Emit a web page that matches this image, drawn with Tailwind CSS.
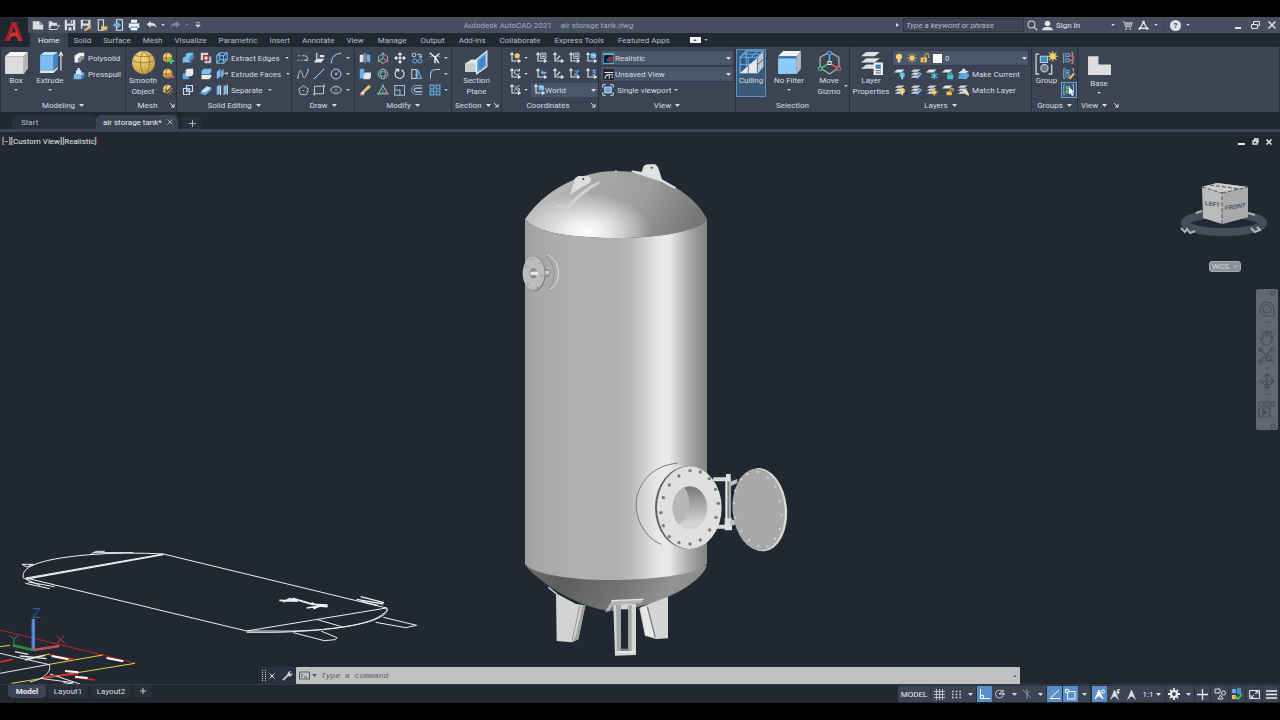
<!DOCTYPE html>
<html lang="en">
<head>
<meta charset="utf-8">
<title>Autodesk AutoCAD 2021</title>
<script src="https://cdn.jsdelivr.net/npm/@tailwindcss/browser@4"></script>
</head>
<body class="bg-black">
<svg width="0" height="0" class="absolute" aria-hidden="true">
<defs>
<linearGradient id="gBody" x1="0" x2="1" y1="0" y2="0"><stop offset="0" stop-color="#9c9e9d"/><stop offset=".06" stop-color="#a6a8a7"/><stop offset=".3" stop-color="#b0b2b0"/><stop offset=".5" stop-color="#adafad"/><stop offset=".6" stop-color="#bcbebc"/><stop offset=".72" stop-color="#e2e5e1"/><stop offset=".79" stop-color="#e8ebe7"/><stop offset=".88" stop-color="#b4b6b4"/><stop offset=".95" stop-color="#929492"/><stop offset="1" stop-color="#858785"/></linearGradient>
<linearGradient id="gDome" x1="0" x2="1" y1=".3" y2=".5"><stop offset="0" stop-color="#c3c5c4"/><stop offset=".35" stop-color="#a6a8a7"/><stop offset=".65" stop-color="#9c9e9d"/><stop offset="1" stop-color="#747675"/></linearGradient>
<radialGradient id="gGlow" gradientUnits="userSpaceOnUse" cx="586" cy="232" r="66" gradientTransform="translate(0 93) scale(1 .6)"><stop offset="0" stop-color="#fff"/><stop offset=".3" stop-color="#fff" stop-opacity=".8"/><stop offset="1" stop-color="#fff" stop-opacity="0"/></radialGradient>
<linearGradient id="gBase" x1="0" x2="1" y1="0" y2=".15"><stop offset="0" stop-color="#6d6f6f"/><stop offset=".25" stop-color="#5c5e5e"/><stop offset=".6" stop-color="#737575"/><stop offset=".85" stop-color="#929494"/><stop offset="1" stop-color="#8a8c8b"/></linearGradient>
<linearGradient id="gNeck" x1="0" x2="1"><stop offset="0" stop-color="#d0d3cf"/><stop offset=".5" stop-color="#eef0ed"/><stop offset="1" stop-color="#dfe1de"/></linearGradient>
<linearGradient id="gHole" x1="0" x2=".1" y1="0" y2="1"><stop offset="0" stop-color="#6f7170"/><stop offset=".45" stop-color="#a2a4a2"/><stop offset=".9" stop-color="#d2d4d2"/></linearGradient>
<radialGradient id="gBall" cx=".4" cy=".3" r=".8"><stop offset="0" stop-color="#f7df92"/><stop offset="1" stop-color="#c0932f"/></radialGradient>
<clipPath id="cHole"><ellipse cx="570" cy="174" rx="52" ry="65"/></clipPath>
</defs>
<symbol id="dn" viewBox="0 0 5 3"><path d="M0 0h5L2.500 3z" fill="currentColor"/></symbol>
<symbol id="launch" viewBox="0 0 6 6"><path d="M1 1l4 4M5 2v3H2" stroke="currentColor" fill="none"/></symbol>
<symbol id="logo" viewBox="0 0 20 22"><path d="M1 20L8 1h4l7 19h-4.500l-1.500-4C9 14 6 15 5.500 20zM7 13c2-2 4-2 5-1L10 5z" fill="#d8312f" fill-rule="evenodd"/><path d="M8 1h4l7 19h-2L10 3 4 20H1z" fill="#a51f24"/></symbol>
<symbol id="new" viewBox="0 0 16 16"><path d="M1 3h9l5 5v6H1z" fill="#d9dbdf"/><path d="M10 3v5h5z" fill="#8d949f"/></symbol>
<symbol id="open" viewBox="0 0 16 16"><path d="M1 13V3h4l2 2h5v3H5z" fill="#d9dbdf"/><path d="M4.500 8.500h11L12 14H1.500z" fill="none" stroke="#d9dbdf" stroke-width="1.200"/></symbol>
<symbol id="save" viewBox="0 0 16 16"><path d="M1 1h14v14H1z" fill="#d9dbdf"/><path d="M4 1h8v5H4zM4 9h8v6H4z" fill="#4a5464"/><path d="M6 11h4v4H6zM9 2h2v3H9z" fill="#d9dbdf"/></symbol>
<symbol id="saveas" viewBox="0 0 16 16"><path d="M1 1h13v12H1z" fill="#d9dbdf"/><path d="M4 2h7v4H4zM3 9h8v4H3z" fill="#4a5464"/><path d="M5 15l8-7 2 2-7 6z" fill="#e8b56a"/><path d="M13 8l2 2 1-2-2-1z" fill="#d94a4a"/></symbol>
<symbol id="openweb" viewBox="0 0 16 16"><path d="M3 1h7v14H3z" fill="none" stroke="#d9dbdf" stroke-width="1.500"/><path d="M7 9h3l1 1h5l-2 5H7z" fill="#f0c36b"/></symbol>
<symbol id="saveweb" viewBox="0 0 16 16"><path d="M6 1h8v14H6z" fill="none" stroke="#d9dbdf" stroke-width="1.500"/><path d="M2 6h5V3l5 5-5 5v-3H2z" fill="#67b5e8"/></symbol>
<symbol id="print" viewBox="0 0 16 16"><path d="M4 1h8v4H4zM1 6h14v6H1z" fill="#f0f2f4"/><path d="M3 10h10v5H3z" fill="#67b5e8"/><path d="M4 12h8v3H4z" fill="#fff"/></symbol>
<symbol id="undo" viewBox="0 0 16 16"><path d="M1 7l6-5v3c5 0 8 2 8 7-2-3-4-3-8-3v3z" fill="currentColor"/></symbol>
<symbol id="more" viewBox="0 0 8 8"><path d="M1 1h6M1 4h6L4 7z" stroke="currentColor" fill="currentColor"/></symbol>
<symbol id="mag" viewBox="0 0 16 16"><circle cx="6.500" cy="6.500" r="5" fill="none" stroke="#ccd0d6" stroke-width="1.500"/><path d="M10 10l5 5" stroke="#ccd0d6" stroke-width="2"/></symbol>
<symbol id="user" viewBox="0 0 16 16"><circle cx="8" cy="5" r="4" fill="#dfe2e6"/><path d="M0 15c0-4 4-5 8-5s8 1 8 5z" fill="#dfe2e6"/></symbol>
<symbol id="cart" viewBox="0 0 16 16"><path d="M1 2h2l2 8h8l2-6H4" fill="#b9bec7" stroke="#b9bec7" stroke-width="1.200"/><path d="M6 5v4M9 5v4M12 5v4" stroke="#454f60"/><circle cx="6" cy="13" r="1.500" fill="#b9bec7"/><circle cx="12" cy="13" r="1.500" fill="#b9bec7"/></symbol>
<symbol id="apps" viewBox="0 0 16 16"><path d="M3 12L8 3l5 9M2 12h12" fill="none" stroke="#dfe2e6" stroke-width="2"/><circle cx="8" cy="3" r="2" fill="#dfe2e6"/><circle cx="2.500" cy="12.500" r="2" fill="#dfe2e6"/><circle cx="13.500" cy="12.500" r="2" fill="#dfe2e6"/></symbol>
<symbol id="box" viewBox="0 0 24 24"><path d="M1 6l5-4h17l-4 4z" fill="#f4f4f4"/><path d="M1 6h18v17H1z" fill="#dcdcdc"/><path d="M19 6l4-4v16l-4 5z" fill="#b4b5b7"/></symbol>
<symbol id="extrude" viewBox="0 0 24 24"><path d="M2 5l4-3h13l-4 3z" fill="#bfe0fa"/><path d="M2 5h13v15H2z" fill="#79bdf2"/><path d="M15 5l4-3v14l-4 4z" fill="#3f86c4"/><path d="M2 20h13l4-4v2l-4 4H2z" fill="#e2e4e6"/><path d="M22 20V3M20 6l2-4 2 4" stroke="#eee" fill="none"/></symbol>
<symbol id="polysolid" viewBox="0 0 16 16"><path d="M2 5l6-4h7v5h-5l-3 3v5H2z" fill="#f0f0f0"/><path d="M7 9l3-3h5v4h-3l-2 4H7z" fill="#8f9399"/></symbol>
<symbol id="presspull" viewBox="0 0 16 16"><path d="M1 9l4-3h10v5l-4 4H1z" fill="#7dbdee"/><path d="M4 6V3h2V0h3v3h2v5H4z" fill="#d8ecfb"/><path d="M11 11l4-4v5l-4 3z" fill="#3d7fb9"/></symbol>
<symbol id="smooth" viewBox="0 0 24 24"><circle cx="12" cy="12" r="11" fill="url(#gBall)"/><path d="M1.500 10c5 3 15 3 21 0M12 1c-4 6-4 16 0 22M12 1c7 5 7 10 4 21M4 5c5 2 12 2 16 0" fill="none" stroke="#8a6a26" stroke-width=".7"/></symbol>
<symbol id="ball" viewBox="0 0 16 16"><circle cx="7.500" cy="7.500" r="6.500" fill="url(#gBall)"/><path d="M1 7c4 2 9 2 13 0M7 1c-2 4-2 9 0 13" fill="none" stroke="#6f5318"/></symbol>
<symbol id="meshadd" viewBox="0 0 16 16"><use href="#ball"/><path d="M12 8v8M8 12h8" stroke="#52c46a" stroke-width="2.500"/></symbol>
<symbol id="meshsub" viewBox="0 0 16 16"><use href="#ball"/><path d="M7 12h9" stroke="#e05a50" stroke-width="2.500"/></symbol>
<symbol id="meshcrease" viewBox="0 0 16 16"><use href="#ball"/><path d="M3 14L14 3M6 15l9-8" stroke="#3b4453" stroke-width="1.500"/></symbol>
<symbol id="union" viewBox="0 0 16 16"><path d="M1 8l3-2h1V3l3-2h7v8l-3 2v3H3l-2 1z" fill="#7dbdf0"/><path d="M11 6l4-4v7l-3 2v2l-3 2V9z" fill="#4b8fcb"/></symbol>
<symbol id="subtract" viewBox="0 0 16 16"><path d="M5 3l2-2h8v8l-3 2H5z" fill="#e9ebee"/><path d="M1 7h8v8H1z" fill="#5fa5dd"/><path d="M5 6h5v5H5z" fill="#dfe2e6"/></symbol>
<symbol id="intersect" viewBox="0 0 16 16"><path d="M6 2h8v8H6zM2 6h8v8H2z" fill="none" stroke="#d4d8dd" stroke-width="1.500"/><path d="M6 6h5v5H6z" fill="#7dbdf0"/></symbol>
<symbol id="interfere" viewBox="0 0 16 16"><path d="M1 1h10v10H1z" fill="#d4d7db"/><path d="M6 6h9v9H6z" fill="#b8bcc2"/><path d="M4 4h8v8H4z" fill="#b02b36"/><path d="M6 6h4v4H6z" fill="#eee"/></symbol>
<symbol id="slice" viewBox="0 0 16 16"><path d="M2 4l3-3h10v5l-3 2H2z" fill="#7dbdf0"/><path d="M2 10l1-1h12v3l-3 3H2z" fill="#e9ebee"/></symbol>
<symbol id="thicken" viewBox="0 0 16 16"><path d="M1 10l8-7 6 2-8 7z" fill="#c9e4fa"/><path d="M1 10l6 2 8-7v3l-8 7-6-2z" fill="#64a9df"/></symbol>
<symbol id="edges" viewBox="0 0 16 16"><path d="M1 5h9v10H1zM1 5l4-4h10v9l-5 5M10 5l5-4M5 1v9L1 15M5 10h10" fill="none" stroke="#6fb5ec" stroke-width="1.500"/></symbol>
<symbol id="faces" viewBox="0 0 16 16"><path d="M1 5l5-4v10l-5 4zM7 4l3-3v9L7 14z" fill="#7dbdf0"/><path d="M10 7h6M14 5l2 2-2 2" stroke="#eee" fill="none"/></symbol>
<symbol id="separate" viewBox="0 0 16 16"><path d="M1 3l4-2v12l-4 2zM10 2h4v11l-4 2z" fill="#7dbdf0"/><path d="M6 2v13M15 1v13" stroke="#e6e6e6" stroke-width="1.500"/></symbol>
<symbol id="pline3" viewBox="0 0 16 16"><path d="M1 11h2m2 0h2m2 0h6M2 5h2m3 0h3c5 0 5 6 1 6" fill="none" stroke="#c9cdd3" stroke-width="1.300"/></symbol>
<symbol id="plane" viewBox="0 0 16 16"><path d="M5 1v9h9" fill="none" stroke="#e3e5e8" stroke-width="1.500"/><path d="M1 14l4-5h10l-4 5zM9 4h6v3H9z" fill="#e3e5e8"/></symbol>
<symbol id="arc" viewBox="0 0 16 16"><path d="M2 14C2 7 7 2 14 2" fill="none" stroke="#c9cdd3" stroke-width="1.300"/><path d="M1 13h2v2H1zM13 1h2v2h-2zM5 4h2v2H5z" fill="#7dbdf0"/></symbol>
<symbol id="spline" viewBox="0 0 16 16"><path d="M1 14C3 1 5 1 7 8s4 8 8-6" fill="none" stroke="#c9cdd3" stroke-width="1.300"/><path d="M0 12h2v2H0zM14 1h2v2h-2z" fill="#7dbdf0"/></symbol>
<symbol id="line" viewBox="0 0 16 16"><path d="M2 14L14 2" stroke="#c9cdd3" stroke-width="1.300"/><path d="M1 13h2v2H1zM13 1h2v2h-2z" fill="#7dbdf0"/></symbol>
<symbol id="circle" viewBox="0 0 16 16"><circle cx="8" cy="8" r="6.500" fill="none" stroke="#c9cdd3" stroke-width="1.300"/><path d="M8 8l5-5M7 7h2v2H7z" stroke="#7dbdf0" fill="#7dbdf0"/></symbol>
<symbol id="polygon" viewBox="0 0 16 16"><path d="M8 1l7 5-2.500 8h-9L1 6zM7 8h2" fill="none" stroke="#c9cdd3" stroke-width="1.300"/></symbol>
<symbol id="rect" viewBox="0 0 16 16"><path d="M2 3h12v10H2z" fill="none" stroke="#c9cdd3" stroke-width="1.300"/><path d="M0 12h3v3H0zM13 1h3v3h-3z" fill="#8fa9bd"/></symbol>
<symbol id="ellipse" viewBox="0 0 16 16"><ellipse cx="8" cy="8" rx="7" ry="4.500" fill="none" stroke="#c9cdd3" stroke-width="1.300"/><path d="M7 7h2v2H7zM7 2h2v2H7z" fill="#7dbdf0"/></symbol>
<symbol id="mirror3" viewBox="0 0 16 16"><path d="M1 4l5-1v10l-5 1z" fill="#e3e5e8"/><path d="M10 3l5 1v10l-5-1z" fill="#67aee6"/><path d="M8 1v14" stroke="#eee"/></symbol>
<symbol id="gizmo" viewBox="0 0 16 16"><path d="M8 2l6 4v6l-6 3-6-3V6z" fill="none" stroke="#c9cdd3"/><path d="M8 8V2" stroke="#67aee6" stroke-width="1.500"/><path d="M8 8l-5 4" stroke="#4dbd7d" stroke-width="1.500"/><path d="M8 8l5 4" stroke="#d9606a" stroke-width="1.500"/><circle cx="8" cy="2" r="1.500" fill="#67aee6"/><circle cx="2.500" cy="12" r="1.700" fill="#4dbd7d"/><circle cx="13.500" cy="12" r="1.700" fill="#d9606a"/></symbol>
<symbol id="move" viewBox="0 0 16 16"><path d="M8 2v12M2 8h12" stroke="#eceef0" stroke-width="1.500"/><path d="M8 0l3 4H5zM8 16l3-4H5zM0 8l4-3v6zM16 8l-4-3v6z" fill="#eceef0"/></symbol>
<symbol id="copy" viewBox="0 0 16 16"><circle cx="4" cy="4" r="2.500" fill="none" stroke="#c9cdd3" stroke-width="1.300"/><circle cx="5" cy="12" r="2.800" fill="none" stroke="#67aee6" stroke-width="1.300"/><circle cx="12" cy="12" r="2.800" fill="none" stroke="#67aee6" stroke-width="1.300"/><path d="M8 3h5v4M11 5l2 3 2-3" fill="none" stroke="#c9cdd3" stroke-width="1.300"/></symbol>
<symbol id="trim" viewBox="0 0 16 16"><path d="M1 1l7 6M8 6l5 9M14 2L8 7v8" fill="none" stroke="#eceef0" stroke-width="2"/><path d="M1 6h4M11 6h4" stroke="#67aee6"/></symbol>
<symbol id="align3" viewBox="0 0 16 16"><path d="M3 1h4v5h2v8H1V1z" fill="#67aee6"/><path d="M6 9l3-3h7v6l-2 3H6z" fill="#e3e5e8"/></symbol>
<symbol id="rot3" viewBox="0 0 16 16"><circle cx="8" cy="8" r="6.500" fill="none" stroke="#d9606a" stroke-width="1.400"/><ellipse cx="8" cy="8" rx="3" ry="6.500" fill="none" stroke="#67aee6" stroke-width="1.400"/><ellipse cx="8" cy="8" rx="6.500" ry="3" fill="none" stroke="#4dbd7d" stroke-width="1.400"/></symbol>
<symbol id="rotate" viewBox="0 0 16 16"><path d="M10 2.500a6 6 0 1 1-6 .5" fill="none" stroke="#e3e5e8" stroke-width="1.500"/><path d="M1 1h6v5z" fill="#e3e5e8"/></symbol>
<symbol id="mirror" viewBox="0 0 16 16"><path d="M1 2h6v12H1z" fill="none" stroke="#c9cdd3" stroke-width="1.400"/><path d="M9 2l5 12H9z" fill="none" stroke="#67aee6" stroke-width="1.400"/></symbol>
<symbol id="fillet" viewBox="0 0 16 16"><path d="M2 14V9c0-4 3-7 7-7h6" fill="none" stroke="#c9cdd3" stroke-width="1.300"/><path d="M2 9c0-4 3-7 7-7" stroke="#67aee6" fill="none" stroke-width="1.500"/></symbol>
<symbol id="erase" viewBox="0 0 16 16"><path d="M5 9l8-8 3 3-8 7z" fill="#f0c36b"/><path d="M5 9l3 2-2 4H1l1-3z" fill="#e6ded5"/><path d="M2 12l4 3H1z" fill="#e5584e"/></symbol>
<symbol id="scale3" viewBox="0 0 16 16"><path d="M8 2l6 11H2z" fill="none" stroke="#c9cdd3" stroke-width="1.300"/><path d="M8 7v5M5 12h6" stroke="#4dbd7d"/><circle cx="8" cy="2" r="1.500" fill="#67aee6"/><circle cx="2" cy="13" r="1.700" fill="#4dbd7d"/><circle cx="14" cy="13" r="1.700" fill="#d9606a"/></symbol>
<symbol id="scale" viewBox="0 0 16 16"><path d="M1 15V2h13v13zM1 8h7v7" fill="none" stroke="#9fbdd2" stroke-width="1.400"/></symbol>
<symbol id="offset" viewBox="0 0 16 16"><path d="M15 2H7a6 6 0 0 0 0 12h8" fill="none" stroke="#67aee6" stroke-width="1.400"/><path d="M15 5.500H7a2.500 2.500 0 0 0 0 5h8" fill="none" stroke="#c9cdd3" stroke-width="1.400"/></symbol>
<symbol id="array" viewBox="0 0 16 16"><path d="M1.500 1.500h5v5h-5zM9.500 1.500h5v5h-5zM1.500 9.500h5v5h-5zM9.500 9.500h5v5h-5z" fill="none" stroke="#67aee6" stroke-width="1.600"/></symbol>
<symbol id="section" viewBox="0 0 24 24"><path d="M1 13l6-4h9l-2 12H1z" fill="#e4e4e4"/><path d="M1 13h10v8H1z" fill="#c9cacc"/><path d="M12 9l10-8v15l-10 7z" fill="#6db1e6" stroke="#f0f0f0"/><path d="M14 10l6-5v10l-6 5z" fill="#3f86c4"/></symbol>
<symbol id="ucs" viewBox="0 0 16 16"><path d="M4 2v10h10M2 4l2-3 2 3M12 10l3 2-3 2" fill="none" stroke="#dfe2e6" stroke-width="1.500"/></symbol>
<symbol id="ucsY" viewBox="0 0 16 16"><use href="#ucs"/><circle cx="11" cy="5" r="3.500" fill="#f2c866"/></symbol>
<symbol id="ucsS" viewBox="0 0 16 16"><use href="#ucs"/><path d="M7.500 1.500h7v7h-7zM9 4h4M9 6h4" stroke="#dfe2e6" fill="none" stroke-width="1.200"/></symbol>
<symbol id="ucsL" viewBox="0 0 16 16"><use href="#ucs"/><path d="M6 10l5-5" stroke="#dfe2e6" stroke-width="1.500"/></symbol>
<symbol id="ucsW" viewBox="0 0 16 16"><use href="#ucs"/><circle cx="11" cy="5" r="4" fill="#67aee6"/><path d="M8 3c2 0 2 2 4 1s2 2 1 4" stroke="#e8f3fb" fill="none"/></symbol>
<symbol id="ucsC" viewBox="0 0 16 16"><use href="#ucs"/><path d="M13 3a3.500 3.500 0 1 0 1 4M14 1v3h-3" stroke="#dfe2e6" fill="none" stroke-width="1.300"/></symbol>
<symbol id="ucsP" viewBox="0 0 16 16"><use href="#ucs"/><path d="M7 6l4-3v2h4v3h-4v1z" fill="#67aee6"/></symbol>
<symbol id="ucsZ" viewBox="0 0 16 16"><use href="#ucs"/><path d="M9 4h5L9 9h5" stroke="#67aee6" fill="none" stroke-width="1.400"/></symbol>
<symbol id="ucs3" viewBox="0 0 16 16"><use href="#ucs"/><path d="M9 3h5l-3 2.500c4 0 4 4-2 3.500" stroke="#67aee6" fill="none" stroke-width="1.400"/></symbol>
<symbol id="ucsX" viewBox="0 0 16 16"><use href="#ucs"/><path d="M7 2l3 3-3 4M14 2c-5 1-5 8 0 7V6h-2" fill="none" stroke="#c9cdd3" stroke-width="1.300"/></symbol>
<symbol id="realistic" viewBox="0 0 16 16"><path d="M0 0h16v16H0z" fill="#4fb3c9"/><path d="M1 3h14v11H1z" fill="#182036"/><path d="M2 6l4-3 3 4v7H2z" fill="#0c1428"/><circle cx="11" cy="9" r="4" fill="#a22734"/><path d="M5 8h4v5H5z" fill="#27509d"/></symbol>
<symbol id="unsaved" viewBox="0 0 16 16"><path d="M0 0h16v16H0z" fill="#23272e"/><path d="M2 5h13M5 8.500h10M3 14c0-3 1-5 4-5M9 14V9M12 12h3" stroke="#dfe2e6" stroke-width="1.500" fill="none"/></symbol>
<symbol id="vport" viewBox="0 0 16 16"><path d="M1 5V1h4M11 1h4v4M15 11v4h-4M5 15H1v-4" fill="none" stroke="#dfe2e6" stroke-width="1.300"/><path d="M3.500 4h9v8h-9z" fill="#67aee6" stroke="#dfe2e6"/></symbol>
<symbol id="culling" viewBox="0 0 24 24"><path d="M1 7l6-6h16v15l-5 6H1z" fill="#2c5e8d" stroke="#7dbdf0"/><path d="M1 7h16l6-6M17 7v15M7 1v15M1 14h16M9 7v15M4 4h16M12 7l6-6M20 4v15" stroke="#7dbdf0" fill="none" stroke-width=".8"/><path d="M1 22L17 8v14z" fill="#e8e8e8"/><path d="M18 7l5-5v14l-5 6z" fill="#c4c7cb"/><path d="M9 15v7M18 14l5-5" stroke="#6d7784"/></symbol>
<symbol id="nofilter" viewBox="0 0 24 24"><path d="M1 6l5-5h17l-4 5z" fill="#f2f2f2"/><path d="M1 6h18v17H1z" fill="#8ccaf7"/><path d="M1 6h18v2H1z" fill="#2d6ea7"/><path d="M19 6l4-5v17l-4 5z" fill="#b4b8bd"/></symbol>
<symbol id="gizmoL" viewBox="0 0 24 24"><path d="M12 2l9 5v10l-9 6-9-6V7z" fill="none" stroke="#aeb4bd" stroke-width="1.200"/><path d="M12 12V3" stroke="#67aee6" stroke-width="1.500"/><path d="M11 13l-8 5" stroke="#4dbd7d" stroke-width="1.500"/><path d="M13 13l8 5" stroke="#d9606a" stroke-width="1.500"/><path d="M10.500 11h3v3h-3z" fill="#3b4453" stroke="#eee"/><circle cx="12" cy="3" r="1.800" fill="#3b4453" stroke="#67aee6"/><circle cx="3" cy="18" r="1.800" fill="#3b4453" stroke="#4dbd7d"/><circle cx="21" cy="18" r="1.800" fill="#3b4453" stroke="#d9606a"/></symbol>
<symbol id="layerprop" viewBox="0 0 24 24"><path d="M2 6l5-4h13l-5 4zM2 12l5-4h13l-5 4zM2 18l5-4h13l-5 4z" fill="#dfe1e4"/><path d="M14 12h9v12h-9z" fill="#eef0f2"/><path d="M16 14h5v4h-5z" fill="#3f7fbf"/><path d="M16 20h5M16 22h5" stroke="#58616e"/></symbol>
<symbol id="bulb" viewBox="0 0 16 16"><circle cx="8" cy="6" r="5" fill="#fbd36f"/><path d="M6 11h4v4H6z" fill="#e3e5e8"/></symbol>
<symbol id="sun" viewBox="0 0 16 16"><circle cx="8" cy="8" r="4" fill="#f9cf68"/><path d="M8 0v16M0 8h16M2.500 2.500l11 11M13.500 2.500l-11 11" stroke="#f9cf68" stroke-width="1.200"/></symbol>
<symbol id="lockopen" viewBox="0 0 16 16"><path d="M1 7h10v8H1z" fill="#f2be55"/><path d="M8 7V4a3 3 0 0 1 6 0v4" fill="none" stroke="#f2be55" stroke-width="1.600"/><path d="M5 10h2v3H5z" fill="#6d5420"/></symbol>
<symbol id="sheet1" viewBox="0 0 16 16"><path d="M0 6l4-4h10l-4 4z" fill="#dfe2e6"/></symbol>
<symbol id="sheet3" viewBox="0 0 16 16"><path d="M1 5l4-3h9l-4 3zM1 9l4-3h9l-4 3zM1 13l4-3h9l-4 3z" fill="#d5d8dd"/></symbol>
<symbol id="layoff" viewBox="0 0 16 16"><use href="#sheet1"/><circle cx="11" cy="9" r="3.500" fill="#5cc6ea"/><path d="M10 12h2v3h-2z" fill="#dfe2e6"/></symbol>
<symbol id="layiso" viewBox="0 0 16 16"><use href="#sheet3"/><path d="M9 14l6-7" stroke="#7dbdf0" stroke-width="2"/></symbol>
<symbol id="layfrz" viewBox="0 0 16 16"><use href="#sheet1"/><path d="M11 6v9M7 8l8 5M15 8l-8 5" stroke="#4fc6d6" stroke-width="1.800"/></symbol>
<symbol id="laylock" viewBox="0 0 16 16"><use href="#sheet1"/><path d="M7 9h8v6H7z" fill="#45bccb"/><path d="M9 9V7h4v2" stroke="#45bccb" fill="none" stroke-width="1.500"/></symbol>
<symbol id="layon" viewBox="0 0 16 16"><use href="#sheet3"/><circle cx="11" cy="9" r="3.500" fill="#fbd36f"/><path d="M10 12h2v3h-2z" fill="#dfe2e6"/></symbol>
<symbol id="laythaw" viewBox="0 0 16 16"><use href="#sheet3"/><circle cx="11" cy="11" r="2.500" fill="#f9cf68"/><path d="M11 6v10M6 11h10M8 8l6 6M14 8l-6 6" stroke="#f9cf68"/></symbol>
<symbol id="layunlock" viewBox="0 0 16 16"><use href="#sheet1"/><path d="M6 10h7v5H6z" fill="#f2be55"/><path d="M11 10V8a2 2 0 0 1 4 0v2" stroke="#f2be55" fill="none" stroke-width="1.500"/></symbol>
<symbol id="makecur" viewBox="0 0 16 16"><path d="M1 7l4-3h11l-4 3z" fill="#dfe2e6"/><path d="M1 10l4-3h11l-4 4zM1 14l2-3h9l4-3v3l-4 4z" fill="#67aee6"/><circle cx="9" cy="3" r="2.500" fill="#cfe6f8"/></symbol>
<symbol id="matchlay" viewBox="0 0 16 16"><use href="#sheet3"/><path d="M7 8l6 7 3-2-4-6z" fill="#f1e3c4"/><path d="M13 15l3-2v3z" fill="#e8b56a"/></symbol>
<symbol id="group" viewBox="0 0 24 24"><path d="M5 4H2v19h3M14 23h3v-9" fill="none" stroke="#c9cdd3" stroke-width="1.300"/><path d="M6 6h7v6H6z" fill="#4b8fcb" stroke="#a9cdec"/><circle cx="10" cy="17.500" r="3.500" fill="#6c7685" stroke="#c9cdd3"/><circle cx="18" cy="6" r="3" fill="#f9cf68"/><path d="M18 1v10M13 6h10M14.500 2.500l7 7M21.500 2.500l-7 7" stroke="#f9cf68"/></symbol>
<symbol id="ungroup" viewBox="0 0 16 16"><path d="M4 2h4v4H4zM4 9h4v4H4z" fill="none" stroke="#67aee6" stroke-width="1.400"/><path d="M11 1h2v14h-2M1 1v14" stroke="#c9cdd3" fill="none"/><path d="M9 4l6 3M9 12l6-3" stroke="#e0525c" stroke-width="2"/></symbol>
<symbol id="grpedit" viewBox="0 0 16 16"><path d="M3 1H1v13h2M12 1h2v4" fill="none" stroke="#c9cdd3"/><path d="M4 3h4v3H4zM4 8h4v4H4z" fill="none" stroke="#67aee6" stroke-width="1.400"/><path d="M7 14l7-8 2 2-6 7z" fill="#e8b56a"/></symbol>
<symbol id="grpsel" viewBox="0 0 16 16"><path d="M3 1H1v13h2M12 1h2v13" fill="none" stroke="#c9cdd3"/><path d="M4 3h5v3H4zM4 8h5v4H4z" fill="#3fa56b" stroke="#6ad39a"/><path d="M8 4v10l2-2 2 4 2-1-2-4h3z" fill="#fff"/></symbol>
<symbol id="base" viewBox="0 0 24 24"><path d="M1 3h10v8h12v10H1z" fill="#dcdde0"/></symbol>
</svg>

<div class="flex min-h-screen flex-col bg-[#222831] font-[Roboto,'Noto_Sans',sans-serif] text-[8px] leading-[11px] whitespace-nowrap text-[#d9dce1]">
<div class="h-[17px] bg-black"></div>

<!-- Title bar and ribbon tabs -->
<header class="flex">
  <button aria-label="Application menu" class="flex h-[30px] w-[28px] items-center justify-center bg-[#1f262f]"><svg class="h-[22px] w-5"><use href="#logo"/></svg></button>
  <div class="flex min-w-0 flex-1 flex-col">
    <div class="flex h-4 items-center bg-[#454f60]">
      <div class="flex items-center gap-1 pl-1">
        <button aria-label="New"><svg class="size-3"><use href="#new"/></svg></button>
        <button aria-label="Open"><svg class="size-3"><use href="#open"/></svg></button>
        <button aria-label="Save"><svg class="size-3"><use href="#save"/></svg></button>
        <button aria-label="Save As"><svg class="size-3"><use href="#saveas"/></svg></button>
        <button aria-label="Open from Web"><svg class="size-3"><use href="#openweb"/></svg></button>
        <button aria-label="Save to Web"><svg class="size-3"><use href="#saveweb"/></svg></button>
        <button aria-label="Plot"><svg class="size-3"><use href="#print"/></svg></button>
        <button aria-label="Undo" class="flex items-center gap-1 pl-0.5"><svg class="h-3 w-[11px]"><use href="#undo"/></svg><svg class="h-[2px] w-1"><use href="#dn"/></svg></button>
        <button aria-label="Redo" class="flex items-center gap-1 pl-px text-[#7c8696]"><svg class="h-3 w-[11px] -scale-x-100"><use href="#undo"/></svg><svg class="h-[2px] w-1"><use href="#dn"/></svg></button>
        <button aria-label="Customize" class="pl-0.5"><svg class="size-[6px]"><use href="#more"/></svg></button>
      </div>
      <div class="flex flex-1 justify-center gap-[9px] text-[#a4abb6]"><span>Autodesk AutoCAD 2021</span><span>air storage tank.dwg</span></div>
      <div class="flex items-center">
        <span class="mr-1 h-0 w-0 border-y-2 border-l-[3px] border-y-transparent border-l-[#d3d7dd]"></span>
        <input aria-label="Search" placeholder="Type a keyword or phrase" class="h-[14px] w-[121px] border border-[#2f3744] bg-[#3e4756] px-0.5 italic placeholder:text-[#b6bcc6]">
        <button aria-label="Find" class="ml-[3px]"><svg class="size-[11px]"><use href="#mag"/></svg></button>
        <button class="ml-1 flex w-[73px] items-center text-[#e3e6ea]"><svg class="mr-[3px] size-[11px]"><use href="#user"/></svg>Sign In<svg class="ml-auto h-[2px] w-1"><use href="#dn"/></svg></button>
        <button aria-label="Store" class="ml-[7px]"><svg class="size-[11px]"><use href="#cart"/></svg></button>
        <button aria-label="Apps" class="ml-[5px] flex items-center gap-[5px]"><svg class="size-[11px]"><use href="#apps"/></svg><svg class="h-[2px] w-1"><use href="#dn"/></svg></button>
        <button aria-label="Help" class="ml-[5px] flex items-center gap-[5px] border-l border-[#3b4453] pl-[6px]"><span class="size-[11px] rounded-full bg-[#dfe2e6] text-center font-bold text-[#454f60]">?</span><svg class="h-[2px] w-1"><use href="#dn"/></svg></button>
        <button aria-label="Minimize" class="ml-[45px] flex h-2 w-[6px] items-end"><span class="h-[2px] w-full bg-[#e3e6ea]"></span></button>
        <button aria-label="Restore" class="ml-[10px]"><svg viewBox="0 0 9 8" class="h-2 w-[9px]"><path d="M.500 3.500h6v4h-6zM2.500 3V.500h6v4H7" fill="none" stroke="#e3e6ea"/></svg></button>
        <button aria-label="Close" class="ml-2 mr-1"><svg viewBox="0 0 8 8" class="size-2"><path d="M.500.500l7 7M7.500.500l-7 7" stroke="#e3e6ea" stroke-width="1.500"/></svg></button>
      </div>
    </div>
    <nav class="flex h-[14px] items-stretch text-[#b9bfc8]">
      <div class="flex pl-[2px] [&>button]:px-[6px]"><button class="bg-[#3b4453] text-[#eceef1] !px-2">Home</button><button>Solid</button><button>Surface</button><button>Mesh</button><button>Visualize</button><button>Parametric</button><button>Insert</button><button>Annotate</button><button>View</button></div>
      <div class="flex pl-px [&>button]:px-[7px]"><button>Manage</button><button>Output</button><button>Add-ins</button><button>Collaborate</button><button>Express Tools</button><button>Featured Apps</button></div>
      <button aria-label="Ribbon display" class="ml-[13px] flex items-center gap-[3px]"><span class="flex h-[6px] w-[11px] items-center justify-center bg-[#f0f1f3]"><svg class="h-[2px] w-1 rotate-180 text-[#454f60]"><use href="#dn"/></svg></span><svg class="h-[2px] w-1"><use href="#dn"/></svg></button>
    </nav>
  </div>
</header>

<!-- Ribbon -->
<section aria-label="Ribbon" class="flex h-[65px] border-l border-[#2a313c] bg-[#3b4453] [&>div]:flex [&>div]:shrink-0 [&>div]:flex-col [&>div]:border-r [&>div]:border-[#2a313c] [&>div]:pt-[3px]">
  <div class="w-[125px]">
    <div class="flex h-12">
      <button class="flex w-[30px] flex-col items-center"><svg class="size-[25px]"><use href="#box"/></svg>Box<svg class="mt-[3px] h-[2px] w-1"><use href="#dn"/></svg></button>
      <button class="flex w-[38px] flex-col items-center"><svg class="size-[25px]"><use href="#extrude"/></svg>Extrude<svg class="mt-[3px] h-[2px] w-1"><use href="#dn"/></svg></button>
      <div class="ml-1 flex flex-col [&>button]:flex [&>button]:h-4 [&>button]:items-center [&>button]:gap-[3px]">
        <button><svg class="size-3"><use href="#polysolid"/></svg>Polysolid</button>
        <button><svg class="size-3"><use href="#presspull"/></svg>Presspull</button>
      </div>
    </div>
    <button class="flex h-[14px] items-center justify-center gap-1">Modeling<svg class="h-[3px] w-[5px]"><use href="#dn"/></svg></button>
  </div>
  <div class="w-[51px]">
    <div class="flex h-12">
      <button class="flex w-[34px] flex-col items-center"><svg class="size-[25px] shrink-0"><use href="#smooth"/></svg>Smooth<br>Object</button>
      <div class="flex flex-col [&>button]:flex [&>button]:size-4 [&>button]:items-center [&>button]:justify-center">
        <button aria-label="Smooth More"><svg class="size-3"><use href="#meshadd"/></svg></button>
        <button aria-label="Smooth Less"><svg class="size-3"><use href="#meshsub"/></svg></button>
        <button aria-label="Refine Mesh"><svg class="size-3"><use href="#meshcrease"/></svg></button>
      </div>
    </div>
    <div class="flex h-[14px] items-center"><span class="flex-1 text-center">Mesh</span><button aria-label="Mesh options" class="pr-px"><svg class="size-[6px]"><use href="#launch"/></svg></button></div>
  </div>
  <div class="w-[115px]">
    <div class="grid h-12 grid-cols-[18px_17px_1fr] pl-[2px] [&>button]:flex [&>button]:h-4 [&>button]:items-center [&>button]:justify-center">
      <button aria-label="Union"><svg class="size-3"><use href="#union"/></svg></button><button aria-label="Interfere"><svg class="size-3"><use href="#interfere"/></svg></button><button class="gap-[3px] !justify-start pl-[2px]"><svg class="size-3"><use href="#edges"/></svg>Extract Edges<svg class="ml-0.5 h-[2px] w-1"><use href="#dn"/></svg></button>
      <button aria-label="Subtract"><svg class="size-3"><use href="#subtract"/></svg></button><button aria-label="Slice"><svg class="size-3"><use href="#slice"/></svg></button><button class="gap-[3px] !justify-start pl-[2px]"><svg class="size-3"><use href="#faces"/></svg>Extrude Faces<svg class="ml-0.5 h-[2px] w-1"><use href="#dn"/></svg></button>
      <button aria-label="Intersect"><svg class="size-3"><use href="#intersect"/></svg></button><button aria-label="Thicken"><svg class="size-3"><use href="#thicken"/></svg></button><button class="gap-[3px] !justify-start pl-[2px]"><svg class="size-3"><use href="#separate"/></svg>Separate<svg class="ml-0.5 h-[2px] w-1"><use href="#dn"/></svg></button>
    </div>
    <button class="flex h-[14px] items-center justify-center gap-1">Solid Editing<svg class="h-[3px] w-[5px]"><use href="#dn"/></svg></button>
  </div>
  <div class="w-[63px]">
    <div class="grid h-12 grid-cols-[16px_16px_26px] pl-[3px] [&>button]:flex [&>button]:h-4 [&>button]:items-center [&>button]:justify-center">
      <button aria-label="3D Polyline"><svg class="size-3"><use href="#pline3"/></svg></button><button aria-label="Planar Surface"><svg class="size-3"><use href="#plane"/></svg></button><button aria-label="Arc" class="gap-1"><svg class="size-3"><use href="#arc"/></svg><svg class="h-[2px] w-1"><use href="#dn"/></svg></button>
      <button aria-label="Spline"><svg class="size-3"><use href="#spline"/></svg></button><button aria-label="Line"><svg class="size-3"><use href="#line"/></svg></button><button aria-label="Circle" class="gap-1"><svg class="size-3"><use href="#circle"/></svg><svg class="h-[2px] w-1"><use href="#dn"/></svg></button>
      <button aria-label="Polygon"><svg class="size-[11px]"><use href="#polygon"/></svg></button><button aria-label="Rectangle"><svg class="size-3"><use href="#rect"/></svg></button><button aria-label="Ellipse" class="gap-1"><svg class="size-3"><use href="#ellipse"/></svg><svg class="h-[2px] w-1"><use href="#dn"/></svg></button>
    </div>
    <button class="flex h-[14px] items-center justify-center gap-1">Draw<svg class="h-[3px] w-[5px]"><use href="#dn"/></svg></button>
  </div>
  <div class="w-[97px]">
    <div class="grid h-12 grid-cols-[18px_17px_17px_18px_24px] pl-px [&>button]:flex [&>button]:h-4 [&>button]:items-center [&>button]:justify-center">
      <button aria-label="3D Mirror"><svg class="size-3"><use href="#mirror3"/></svg></button><button aria-label="3D Move"><svg class="size-3"><use href="#gizmo"/></svg></button><button aria-label="Move"><svg class="size-3"><use href="#move"/></svg></button><button aria-label="Copy"><svg class="size-3"><use href="#copy"/></svg></button><button aria-label="Trim" class="gap-[3px]"><svg class="size-3"><use href="#trim"/></svg><svg class="h-[2px] w-1"><use href="#dn"/></svg></button>
      <button aria-label="3D Align"><svg class="size-3"><use href="#align3"/></svg></button><button aria-label="3D Rotate"><svg class="size-3"><use href="#rot3"/></svg></button><button aria-label="Rotate"><svg class="size-3"><use href="#rotate"/></svg></button><button aria-label="Mirror"><svg class="size-3"><use href="#mirror"/></svg></button><button aria-label="Fillet" class="gap-[3px]"><svg class="size-3"><use href="#fillet"/></svg><svg class="h-[2px] w-1"><use href="#dn"/></svg></button>
      <button aria-label="Erase"><svg class="size-3"><use href="#erase"/></svg></button><button aria-label="3D Scale"><svg class="size-3"><use href="#scale3"/></svg></button><button aria-label="Scale"><svg class="size-3"><use href="#scale"/></svg></button><button aria-label="Offset"><svg class="size-3"><use href="#offset"/></svg></button><button aria-label="Array" class="gap-[3px]"><svg class="size-3"><use href="#array"/></svg><svg class="h-[2px] w-1"><use href="#dn"/></svg></button>
    </div>
    <button class="flex h-[14px] items-center justify-center gap-1">Modify<svg class="h-[3px] w-[5px]"><use href="#dn"/></svg></button>
  </div>
  <div class="w-[50px]">
    <button class="flex h-12 flex-col items-center"><svg class="size-[25px] shrink-0"><use href="#section"/></svg>Section<br>Plane</button>
    <div class="flex h-[14px] items-center justify-between pl-[3px] pr-[2px]"><button class="flex items-center gap-1">Section<svg class="h-[3px] w-[5px]"><use href="#dn"/></svg></button><button aria-label="Section options"><svg class="size-[6px]"><use href="#launch"/></svg></button></div>
  </div>
  <div class="w-[97px]">
    <div class="grid h-12 grid-cols-[26px_19px_16px_16px_17px] pl-[3px] [&>button]:flex [&>button]:h-4 [&>button]:items-center [&>button]:justify-center">
      <button aria-label="UCS View" class="gap-[3px]"><svg class="size-3"><use href="#ucsY"/></svg><svg class="h-[2px] w-1"><use href="#dn"/></svg></button><button aria-label="Named UCS"><svg class="size-3"><use href="#ucsS"/></svg></button><button aria-label="Origin"><svg class="size-3"><use href="#ucsL"/></svg></button><button aria-label="Object UCS"><svg class="size-3"><use href="#ucsS"/></svg></button><button aria-label="World UCS"><svg class="size-3"><use href="#ucsW"/></svg></button>
      <button aria-label="Face UCS" class="gap-[3px]"><svg class="size-3"><use href="#ucsC"/></svg><svg class="h-[2px] w-1"><use href="#dn"/></svg></button><button aria-label="Previous UCS"><svg class="size-3"><use href="#ucsP"/></svg></button><button aria-label="Axis UCS"><svg class="size-3"><use href="#ucsL"/></svg></button><button aria-label="Z Axis"><svg class="size-3"><use href="#ucsZ"/></svg></button><button aria-label="3-Point"><svg class="size-3"><use href="#ucs3"/></svg></button>
      <button aria-label="Rotate UCS" class="gap-[3px]"><svg class="size-3"><use href="#ucsX"/></svg><svg class="h-[2px] w-1"><use href="#dn"/></svg></button>
      <div class="col-span-4 my-px mr-px flex items-center bg-[#4a566a] px-0.5"><svg class="size-3 shrink-0"><use href="#ucsW"/></svg><select aria-label="UCS" class="w-full appearance-none bg-transparent"><option>World</option></select><svg class="h-[3px] w-[5px] shrink-0"><use href="#dn"/></svg></div>
    </div>
    <div class="flex h-[14px] items-center"><span class="flex-1 pl-1 text-center">Coordinates</span><button aria-label="Coordinates options" class="pr-[2px]"><svg class="size-[6px]"><use href="#launch"/></svg></button></div>
  </div>
  <div class="w-[137px]">
    <div class="flex h-12 flex-col pl-[2px] pr-[2px]">
      <div class="my-px flex h-[14px] items-center bg-[#4a566a] px-0.5 outline outline-[#353d4a]"><svg class="size-[11px] shrink-0"><use href="#realistic"/></svg><select aria-label="Visual style" class="w-full appearance-none bg-transparent pl-px"><option>Realistic</option></select><svg class="h-[3px] w-[5px] shrink-0"><use href="#dn"/></svg></div>
      <div class="my-px flex h-[14px] items-center bg-[#4a566a] px-0.5 outline outline-[#353d4a]"><svg class="size-[11px] shrink-0"><use href="#unsaved"/></svg><select aria-label="Named view" class="w-full appearance-none bg-transparent pl-px"><option>Unsaved View</option></select><svg class="h-[3px] w-[5px] shrink-0"><use href="#dn"/></svg></div>
      <button class="flex h-4 items-center gap-[3px] pl-px"><svg class="size-3"><use href="#vport"/></svg>Single viewport<svg class="h-[2px] w-1"><use href="#dn"/></svg></button>
    </div>
    <button class="flex h-[14px] items-center justify-center gap-1">View<svg class="h-[3px] w-[5px]"><use href="#dn"/></svg></button>
  </div>
  <div class="w-[114px]">
    <div class="flex h-12">
      <button aria-pressed="true" class="-mt-px flex h-12 w-[30px] flex-col items-center bg-[#3a5878] pt-px outline outline-[#5f92c0] -outline-offset-1"><svg class="size-[25px]"><use href="#culling"/></svg>Culling</button>
      <button class="flex w-[46px] flex-col items-center"><svg class="size-[25px]"><use href="#nofilter"/></svg>No Filter<svg class="mt-[3px] h-[2px] w-1"><use href="#dn"/></svg></button>
      <button class="flex w-[34px] flex-col items-center"><svg class="size-[25px] shrink-0"><use href="#gizmoL"/></svg>Move<br>Gizmo</button><svg class="-ml-[2px] mt-[35px] h-[2px] w-1 shrink-0"><use href="#dn"/></svg>
    </div>
    <div class="h-[14px] pt-0.5 text-center">Selection</div>
  </div>
  <div class="w-[182px]">
    <div class="flex h-12">
      <button class="flex w-[42px] flex-col items-center"><svg class="size-[25px] shrink-0"><use href="#layerprop"/></svg>Layer<br>Properties</button>
      <div class="flex-1 pr-[2px]">
        <div class="flex h-4 items-center gap-[3px] bg-[#4a566a] px-[2px] outline outline-[#353d4a] -outline-offset-1"><svg class="size-[10px] shrink-0"><use href="#bulb"/></svg><svg class="size-[10px] shrink-0"><use href="#sun"/></svg><svg class="size-[10px] shrink-0"><use href="#lockopen"/></svg><span class="size-[9px] shrink-0 bg-white"></span><select aria-label="Layer" class="w-full appearance-none bg-transparent"><option>0</option></select><svg class="h-[3px] w-[5px] shrink-0"><use href="#dn"/></svg></div>
        <div class="grid grid-cols-[16px_16px_16px_16px_1fr] [&>button]:flex [&>button]:h-4 [&>button]:items-center [&>button]:justify-center">
          <button aria-label="Layer Off"><svg class="size-3"><use href="#layoff"/></svg></button><button aria-label="Isolate"><svg class="size-3"><use href="#layiso"/></svg></button><button aria-label="Freeze"><svg class="size-3"><use href="#layfrz"/></svg></button><button aria-label="Lock"><svg class="size-3"><use href="#laylock"/></svg></button><button class="!justify-start gap-[3px] pl-px"><svg class="size-3"><use href="#makecur"/></svg>Make Current</button>
          <button aria-label="Layers On"><svg class="size-3"><use href="#layon"/></svg></button><button aria-label="Unisolate"><svg class="size-3"><use href="#layiso"/></svg></button><button aria-label="Thaw"><svg class="size-3"><use href="#laythaw"/></svg></button><button aria-label="Unlock"><svg class="size-3"><use href="#layunlock"/></svg></button><button class="!justify-start gap-[3px] pl-px"><svg class="size-3"><use href="#matchlay"/></svg>Match Layer</button>
        </div>
      </div>
    </div>
    <button class="flex h-[14px] items-center justify-center gap-1">Layers<svg class="h-[3px] w-[5px]"><use href="#dn"/></svg></button>
  </div>
  <div class="w-[46px]">
    <div class="flex h-12">
      <button class="flex w-[29px] flex-col items-center"><svg class="size-[25px]"><use href="#group"/></svg>Group</button>
      <div class="flex flex-col [&>button]:flex [&>button]:size-4 [&>button]:items-center [&>button]:justify-center">
        <button aria-label="Ungroup"><svg class="size-3"><use href="#ungroup"/></svg></button>
        <button aria-label="Group Edit"><svg class="size-3"><use href="#grpedit"/></svg></button>
        <button aria-label="Group Selection" aria-pressed="true" class="bg-[#355070] outline outline-[#6fa3d0] -outline-offset-1"><svg class="size-3"><use href="#grpsel"/></svg></button>
      </div>
    </div>
    <button class="flex h-[14px] items-center justify-center gap-1">Groups<svg class="h-[3px] w-[5px]"><use href="#dn"/></svg></button>
  </div>
  <div class="min-w-[42px] flex-1">
    <button class="flex h-12 w-[42px] flex-col items-center pt-[3px]"><svg class="size-[25px]"><use href="#base"/></svg>Base<svg class="mt-[3px] h-[2px] w-1"><use href="#dn"/></svg></button>
    <div class="flex h-[14px] items-center gap-[6px] pl-[3px]"><button class="flex items-center gap-1">View<svg class="h-[3px] w-[5px]"><use href="#dn"/></svg></button><button aria-label="View options"><svg class="size-[6px]"><use href="#launch"/></svg></button></div>
  </div>
</section>

<!-- File tabs -->
<div class="flex h-5 items-end border-b-[3px] border-[#3b4453] pl-[12px]">
  <button class="h-[14px] w-[84px] rounded-t-[5px] bg-[#29303b] pl-[9px] text-left text-[#b4bac4]">Start</button>
  <div class="flex h-[14px] w-[82px] items-center gap-[5px] rounded-t-[5px] bg-[#3b4453] pl-[7px]"><button class="text-[#eceef1]">air storage tank*</button><button aria-label="Close tab"><svg viewBox="0 0 6 6" class="size-[6px]"><path d="M.500.500l5 5M5.500.500l-5 5" stroke="#aab1bc"/></svg></button></div>
  <button aria-label="New tab" class="ml-1 flex h-3 w-[20px] items-center justify-center rounded-t-[4px] bg-[#29303b]"><svg viewBox="0 0 7 7" class="size-[7px]"><path d="M3.500 0v7M0 3.500h7" stroke="#aab1bc"/></svg></button>
</div>

<!-- Drawing area -->
<main class="relative">
<svg viewBox="0 132 1280 552" class="block w-full" role="img" aria-label="3D model of an air storage tank">
  <g>
    <path d="M525 219C545 190 580 171 616 171S692 190 707 219C700 231 660 238 616 238S533 232 525 219z" fill="url(#gDome)"/>
    <path d="M525 219C545 190 580 171 616 171S692 190 707 219C700 231 660 238 616 238S533 232 525 219z" fill="url(#gGlow)"/>
    <g transform="translate(500 155) scale(.3333)">
      <path d="M210 120l15-50 10-7h30l8 8-3 12-30 17z" fill="#dcdedc"/><path d="M170 147l32 6q45-55 98-75l-3 8q-45 25-92 76l-35-7z" fill="#d0d2d0"/><circle cx="250" cy="72" r="3" fill="#333"/>
      <path d="M395 46l30 5 6-18 10-5h25l8 8 12 37 42 24-3 5-40-22-60-19-30-10z" fill="#e0e2e0"/><circle cx="455" cy="38" r="3" fill="#333"/><path d="M348 45v14" stroke="#a9abab" stroke-width="5"/>
    </g>
    <path d="M525 564C530 573 545 583 552 588 570 600 595 610 612 611 640 610 695 592 707 566z" fill="url(#gBase)"/>
    <path d="M525 219C533 232 572 238 616 238S700 231 707 219V564C697 575 650 580 610 580S533 574 525 564z" fill="url(#gBody)"/>
    <g transform="translate(500 155) scale(.3333)">
      <path d="M143 300c45 20 40 90 6 102" fill="none" stroke="#dedede" stroke-width="3"/><path d="M138 302c30 25 30 80 8 97" fill="none" stroke="#858786" stroke-width="2"/>
      <path d="M122 338l26 8v18l-26 8z" fill="#8f918f"/><path d="M124 348h22v10h-22z" fill="#dcdedc"/>
      <ellipse cx="105" cy="356" rx="32" ry="51" fill="#7c7e7d"/><ellipse cx="101" cy="355" rx="33" ry="50" fill="#bbbdbb"/><ellipse cx="100" cy="355" rx="11" ry="16" fill="#8d8f8e"/><path d="M92 350h22v10H92z" fill="#e6e8e6"/>
      <g fill="#6f7170"><circle cx="78" cy="335" r="2"/><circle cx="95" cy="314" r="2"/><circle cx="118" cy="325" r="2"/><circle cx="127" cy="362" r="2"/><circle cx="112" cy="398" r="2"/><circle cx="84" cy="387" r="2"/></g>
    </g>
    <g transform="translate(500 450) scale(.3333)">
      <path d="M532 40C455 45 408 105 409 165c0 50 30 100 75 118L560 290V60z" fill="url(#gNeck)" opacity=".55"/>
      <path d="M532 40C455 45 408 105 409 165c0 50 30 100 75 118" fill="none" stroke="#777977" stroke-width="3"/>
      <path d="M640 82h50v12h-50zM640 224h55v12h-55z" fill="#d8dad8"/><path d="M676 82h7v152h-7z" fill="#e6e8e6"/><path d="M685 82h8v150h-8z" fill="#a9abab"/><path d="M678 72h14v22h-14zM674 205h22v36h-22z" fill="#dcdedc"/><path d="M690 95l22-8v12l-20 10zM690 208l22 4v10l-20 6z" fill="#bdbfbd"/>
      <ellipse cx="782" cy="179" rx="79" ry="125" transform="rotate(-5 782 179)" fill="#d9dbd9"/><ellipse cx="776" cy="179" rx="78" ry="123" transform="rotate(-5 776 179)" fill="#a8a9ab"/>
      <g fill="#c8cac8"><circle cx="723" cy="88" r="4"/><circle cx="742" cy="72" r="4"/><circle cx="773" cy="66" r="4"/><circle cx="803" cy="84" r="4"/><circle cx="825" cy="110" r="4"/><circle cx="840" cy="153" r="4"/><circle cx="845" cy="196" r="4"/><circle cx="840" cy="237" r="4"/><circle cx="825" cy="266" r="4"/><circle cx="803" cy="288" r="4"/><circle cx="775" cy="288" r="4"/><circle cx="747" cy="271" r="4"/><circle cx="723" cy="243" r="4"/><circle cx="706" cy="203" r="4"/><circle cx="702" cy="160" r="4"/><circle cx="707" cy="122" r="4"/></g>
      <ellipse cx="563" cy="173" rx="98" ry="124" fill="#5d5f5e"/><ellipse cx="568" cy="173" rx="97" ry="124" fill="#dfe1de"/>
      <ellipse cx="570" cy="174" rx="52" ry="65" fill="url(#gHole)"/><ellipse cx="516" cy="160" rx="52" ry="68" fill="#b6b8b6" clip-path="url(#cHole)"/>
      <g fill="#777a7b"><circle cx="483" cy="188" r="5"/><circle cx="490" cy="143" r="5"/><circle cx="508" cy="105" r="5"/><circle cx="537" cy="78" r="5"/><circle cx="570" cy="62" r="5"/><circle cx="601" cy="66" r="5"/><circle cx="628" cy="86" r="5"/><circle cx="647" cy="118" r="5"/><circle cx="655" cy="160" r="5"/><circle cx="648" cy="202" r="5"/><circle cx="629" cy="240" r="5"/><circle cx="601" cy="270" r="5"/><circle cx="570" cy="282" r="5"/><circle cx="537" cy="278" r="5"/><circle cx="508" cy="260" r="5"/><circle cx="490" cy="227" r="5"/></g>
      <path d="M168 430l60 32 28 4-21 102-20 9-45-4z" fill="#d2d4d2"/><path d="M248 464l8 2-21 102-17 8 10-20z" fill="#a1a3a2"/><path d="M240 466l-24 106" stroke="#777978" stroke-width="2"/><path d="M145 412l25 20" stroke="#dedede" stroke-width="4"/>
      <path d="M418 474l34-14 52-20v125l-36 2-33-10z" fill="#d4d6d4"/><path d="M424 472l20-2 22 82-8 8-22-5z" fill="#e6e8e6"/><path d="M442 470l24 92" stroke="#777978" stroke-width="4"/>
      <path d="M340 462h68v153l-63 2z" fill="#d4d6d4"/><path d="M363 478h22v128h-22z" fill="#222831"/><path d="M348 465h15v144h-12zM385 465h10v140h-10z" fill="#a5a7a6"/><path d="M363 596h24v10h-24z" fill="#7d7f7e"/><path d="M352 606h52" stroke="#e8eae8" stroke-width="6"/>
      <path d="M335 452l95-4-6 12-85 6-12 18-12 2z" fill="#b4b6b5"/><path d="M335 452l95-4" stroke="#e8eae8" stroke-width="4"/>
    </g>
  </g>
  <g transform="translate(0 540) scale(.3333)" fill="none" stroke="#eef0f2" stroke-width="3">
    <path d="M78 114L490 42 1160 204 740 273 78 114"/><path d="M78 117L490 44" stroke-width="4"/>
    <path d="M70 114C60 75 140 55 270 44 340 38 420 38 490 42M400 38H280M274 41l15-7h25M66 73h34l-20 8zM76 130l73 16M84 126l80 14M70 114l50 22"/>
    <path d="M740 273h80C950 276 1100 260 1145 225c15-10 20-18 12-22M740 277h90C1000 272 1160 250 1163 206M880 278l93 24 33-3 5-6-48-20M950 238l75 22M1127 247l90 16 33-7-100-24"/>
    <path d="M1070 178l80 14M1082 170l70 18M1085 185l50 12" stroke-width="4"/>
    <path d="M838 181l50 2-10-8 60 18 45 2M850 186l20-10 20 8M920 204l40-6-20 8M935 188l20 10 28 2" stroke-width="5"/>
  </g>
  <g transform="translate(0 540) scale(.3333)" fill="none" stroke-width="3">
    <path d="M0 270L405 369" stroke="#c01f2a"/>
    <path d="M0 320l30-4M35 430l370-60M148 373l160-28M80 356l70-14" stroke="#e0d83a"/>
    <path d="M0 400l148-27c8 25-20 45-58 53M0 340l148 34M150 402l90 30M190 428l30 4M120 415l100 13" stroke="#e8eaec"/>
    <path d="M60 348l80 8M75 360l60-14M45 335l40 8" stroke="#e8eaec" stroke-width="4"/>
    <path d="M150 345l75 14M0 366l38-8M180 407l55-6M225 412l60 8M130 412l40-6" stroke="#d92a2a" stroke-width="5"/>
    <path d="M155 348l50 10M320 354l50 10M195 393l40 4M225 410l38 4" stroke="#fff" stroke-width="6"/>
    <path d="M100 332V237" stroke="#4674b8" stroke-width="11"/><path d="M100 332V237" stroke="#6c9add" stroke-width="4"/>
    <path d="M98 206h22l-22 26h24" stroke="#2f66b8"/><path d="M100 330l78-12" stroke="#b9525c" stroke-width="8"/><path d="M98 330l-60-14" stroke="#358a3c" stroke-width="8"/>
    <path d="M170 288l24 22M192 288l-22 22" stroke="#c33b40"/><path d="M30 286l12 12 12-12M42 298v14" stroke="#3d9744"/>
  </g>
  <!-- View cube -->
  <g>
    <ellipse cx="1224" cy="223" rx="39" ry="9" fill="none" stroke="#464e5a" stroke-width="8"/>
    <path d="M1202 187l15-4 31 4v30l-26 7-19-6z" fill="#b9bbbd"/><path d="M1202 187l15-4 31 4-26 6z" fill="#c9cbcd"/><path d="M1222 193l26-6v30l-26 7z" fill="#a8aaac"/><path d="M1202 187l20 6v31M1222 193l26-6M1210 185l30 4" fill="none" stroke="#555" stroke-dasharray="4 2"/>
    <g font-family="Liberation Sans Narrow, Liberation Sans, sans-serif" font-weight="700" font-size="6" fill="#4a4e54"><text transform="translate(1205 205) skewY(8)">LEFT</text><text transform="translate(1225 210) skewY(-8)">FRONT</text></g>
    <path d="M1181 228l4 4 2-3 3 4 5-2M1251 228l4 4 5-2-3-3M1196 213l6-2M1248 213l7 2" fill="none" stroke="#aeb4bb" stroke-width="2"/>
  </g>
</svg>
  <div class="absolute left-0.5 top-1 text-[#e8eaed]">[−][Custom View][Realistic]</div>
  <div class="absolute right-[8px] top-[6px] flex items-center gap-[7px]">
    <button aria-label="Minimize viewport" class="flex h-[6px] w-[7px] items-end"><span class="h-[2px] w-full bg-[#e8eaed]"></span></button>
    <button aria-label="Restore viewport"><svg viewBox="0 0 7 7" class="size-[7px]"><path d="M1 3h4v3H1zM2.500 2.500V1H6v4" fill="none" stroke="#e8eaed" stroke-width="1.300"/></svg></button>
    <button aria-label="Close viewport"><svg viewBox="0 0 6 6" class="size-[6px]"><path d="M.500.500l5 5M5.500.500l-5 5" stroke="#e8eaed" stroke-width="1.500"/></svg></button>
  </div>
  <button class="absolute right-[39px] top-[129px] flex h-[11px] w-8 items-center gap-1 rounded-[3px] border border-[#a9acb2] bg-[#8a8e96] pl-0.5 text-[#d5d8dc]">WCS<svg viewBox="0 0 5 4" class="h-1 w-[5px]"><path d="M.500.500h4l-2 3z" fill="none" stroke="#a6a9af"/></svg></button>
  <div class="absolute right-[2px] top-[157px] h-[141px] w-[22px] rounded-[2px] bg-[#63686e]">
    <svg viewBox="0 0 22 141" class="h-full w-full" fill="none" stroke="#484e56" stroke-width="1.200"><circle cx="17" cy="4" r="2"/><path d="M11 13a7 7 0 1 0 0 14h7v-7a7 7 0 0 0-7-7"/><circle cx="11" cy="20" r="4"/><path d="M9 33h4M9 79h4M9 105h4" /><path d="M4 49l3 1V43h2l1 5v-6h2v6l1-5h2v6l2-2c-1 6-3 8-5 9H8zM4 60l12 12M16 60L4 72M3 59h3v3H3zM15 59h3v3h-3zM3 71h3v3H3z"/><circle cx="13" cy="69" r="3"/><path d="M15 71l3 3M11 85v15M8 88l3-3 3 3M3 92h15l-3-3M18 92l-3 3M6 92c0 5 10 5 10 0M8 97l3 3 3-3M3 113h4v4H3zM9 113h4v4H9zM15 113h3v4h-3zM3 119h11v9H3z"/><path d="M7 121l4 2-4 3z" fill="#484e56"/><circle cx="17" cy="137" r="2"/></svg>
  </div>
  <div class="absolute bottom-0 left-[261px] right-[260px] flex h-[17px] items-center bg-[#2b323d]">
    <svg viewBox="0 0 4 12" class="ml-px h-3 w-1"><path d="M.500 0v12M3.500 0v12" stroke="#c5c9cf" stroke-dasharray="1 1"/></svg>
    <button aria-label="Close command line" class="ml-[3px]"><svg viewBox="0 0 6 6" class="size-[6px]"><path d="M.500.500l5 5M5.500.500l-5 5" stroke="#dfe2e6"/></svg></button>
    <button aria-label="Customize command line" class="ml-[7px]"><svg viewBox="0 0 12 12" class="size-[11px]"><path d="M1 11l6-6" stroke="#c9cdd3" stroke-width="2"/><path d="M6 5c0-3 2-4 4-4L8.500 3l1 1.500L11.500 3c0 3-2 4.500-4 4z" fill="#c9cdd3"/></svg></button>
    <div class="ml-auto flex h-full w-[calc(100%-35px)] items-center rounded-[1px] bg-[#bfc0c1] px-[3px] text-[#555a60]">
      <svg viewBox="0 0 11 9" class="h-[9px] w-[11px]"><path d="M.500 1h10v7H.500zM2 3l2 1.500L2 6M5 6h3" fill="none" stroke="#555a60"/></svg><svg class="ml-[2px] h-[3px] w-[5px]"><use href="#dn"/></svg>
      <input aria-label="Command" placeholder="Type a command" class="ml-1 min-w-0 flex-1 bg-transparent font-['Liberation_Mono',monospace] italic placeholder:text-[#5f6368]">
      <button aria-label="Command history"><svg class="h-[2px] w-1 rotate-180"><use href="#dn"/></svg></button>
    </div>
  </div>
</main>

<!-- Layout tabs and status bar -->
<footer class="flex h-[19px] border-t border-[#343c48]">
  <div class="flex items-start pl-2">
    <button class="h-[13px] w-[38px] rounded-b-[5px] bg-[#3b4453] pb-px font-bold text-[#eceef1]">Model</button>
    <button class="ml-[2px] h-[13px] w-[40px] rounded-b-[5px] bg-[#29303b] pb-px">Layout1</button>
    <button class="ml-[3px] h-[13px] w-[40px] rounded-b-[5px] bg-[#29303b] pb-px">Layout2</button>
    <button aria-label="New layout" class="ml-1 flex h-3 w-4 items-center justify-center rounded-b-[4px] bg-[#29303b]"><svg viewBox="0 0 6 6" class="size-[6px]"><path d="M3 0v6M0 3h6" stroke="#c5c9cf"/></svg></button>
  </div>
  <div class="ml-auto flex h-[17px] items-stretch bg-[#2a313c] pt-px pr-px [&>button]:flex [&>button]:items-center [&>button]:justify-center [&>button]:bg-[#3b4453]">
    <button class="mr-px w-8 text-[#eceef1]">MODEL</button>
    <button aria-label="Grid" class="w-[17px]"><svg viewBox="0 0 11 11" class="size-[11px]"><path d="M2.500 0v11M5.500 0v11M8.500 0v11M0 2.500h11M0 5.500h11M0 8.500h11" stroke="#b9bec7"/></svg></button>
    <button aria-label="Snap" class="w-[16px]"><svg viewBox="0 0 9 9" class="size-[9px]"><path d="M0 1.500h9M0 4.500h9M0 7.500h9" stroke="#dfe2e6" stroke-dasharray="1.500 2.200" stroke-width="1.500"/></svg></button>
    <button aria-label="Snap settings" class="mr-px w-3"><svg class="h-[3px] w-[5px]"><use href="#dn"/></svg></button>
    <button aria-label="Ortho" aria-pressed="true" class="w-[15px] !bg-[#5b8fc7]"><svg viewBox="0 0 11 11" class="size-[11px]"><path d="M1.500 0v9.500H11M1.500 6.500h3v3" fill="none" stroke="#fff"/></svg></button>
    <button aria-label="Polar" class="w-4"><svg viewBox="0 0 12 12" class="size-3"><circle cx="5.500" cy="6" r="4" fill="none" stroke="#b9bec7"/><path d="M5 6h6M5 6l5-4" stroke="#dfe2e6"/></svg></button>
    <button aria-label="Polar settings" class="w-3"><svg class="h-[3px] w-[5px]"><use href="#dn"/></svg></button>
    <button aria-label="Isometric" class="w-[14px]"><svg viewBox="0 0 11 11" class="size-[11px]"><path d="M1 1l8 8M5 0v10" stroke="#8e96a3"/><path d="M8 2L5 5" stroke="#5aa05f"/></svg></button>
    <button aria-label="Isometric settings" class="mr-px w-3"><svg class="h-[3px] w-[5px]"><use href="#dn"/></svg></button>
    <button aria-label="Object snap tracking" aria-pressed="true" class="mr-px w-[15px] !bg-[#5b8fc7]"><svg viewBox="0 0 11 11" class="size-[11px]"><path d="M10 1L1 9.500h10" fill="none" stroke="#fff"/></svg></button>
    <button aria-label="Object snap" aria-pressed="true" class="w-[15px] !bg-[#5b8fc7]"><svg viewBox="0 0 11 11" class="size-[11px]"><path d="M2.500 3v7H10V2.500H3.500M.500.500h3v3h-3z" fill="none" stroke="#fff"/></svg></button>
    <button aria-label="Object snap settings" class="mr-[2px] w-3"><svg class="h-[3px] w-[5px]"><use href="#dn"/></svg></button>
    <button aria-label="Annotation visibility" aria-pressed="true" class="w-[15px] !bg-[#5b8fc7]"><svg viewBox="0 0 11 11" class="size-[11px]"><path d="M5 1l4 9-3-3H4l-3 3z" fill="#fff" stroke="#fff"/><circle cx="9" cy="2.500" r="1.500" fill="none" stroke="#fff"/></svg></button>
    <button aria-label="Auto scale" class="w-4"><svg viewBox="0 0 11 11" class="size-[11px]"><path d="M4.500 1l4 9.500-3-3h-2l-3 3z" fill="#dfe2e6" stroke="#dfe2e6" stroke-width=".5"/><path d="M8 0L6 4h2L7 7l3-4H8.500L10 0z" fill="#dfe2e6"/></svg></button>
    <button aria-label="Annotation scale" class="w-4"><svg viewBox="0 0 11 11" class="size-[11px]"><path d="M5.500 1l4 9.500-3-3h-2l-3 3z" fill="#dfe2e6" stroke="#dfe2e6" stroke-width=".5"/></svg></button>
    <button class="mr-px w-[26px] gap-[3px] text-[#eceef1]">1:1<svg class="h-[3px] w-[5px]"><use href="#dn"/></svg></button>
    <button aria-label="Workspace" class="w-4"><svg viewBox="0 0 12 12" class="size-3"><circle cx="6" cy="6" r="3" fill="none" stroke="#eceef1" stroke-width="2.200"/><path d="M6 0v2M6 10v2M0 6h2M10 6h2M2 2l1 1M9 9l1 1M10 2L9 3M3 9l-1 1" stroke="#eceef1" stroke-width="1.800"/></svg></button>
    <button aria-label="Workspace settings" class="mr-px w-3"><svg class="h-[3px] w-[5px]"><use href="#dn"/></svg></button>
    <button aria-label="Annotation monitor" class="mr-px w-[15px]"><svg viewBox="0 0 11 11" class="size-[11px]"><path d="M5.500 0v11M0 5.500h11" stroke="#eceef1" stroke-width="1.300"/></svg></button>
    <button aria-label="Isolate objects" class="mr-px w-[17px]"><svg viewBox="0 0 12 12" class="size-3"><path d="M1 1h5v4H1zM6.500 7L9 11H4z" fill="none" stroke="#dfe2e6"/><circle cx="9.500" cy="5" r="2" fill="none" stroke="#dfe2e6"/></svg></button>
    <button aria-label="Graphics performance" class="mr-px w-4"><svg viewBox="0 0 12 12" class="size-3"><path d="M1 1h4v4H1z" fill="#5ea8e6"/><path d="M1 7h4v4H1z" fill="#f0c36b"/><path d="M6 0h4v6H6z" fill="#4b8fcb"/><path d="M4 8l3 3 4-5" fill="none" stroke="#4dbd5d" stroke-width="2"/></svg></button>
    <button aria-label="Clean screen" class="mr-px w-4"><svg viewBox="0 0 11 9" class="h-[9px] w-[11px]"><path d="M.500.500h10v8H.500zM6 4l3-2.500M9 4V1.500H6.500M5 5L2 7.500M2 5v2.500h2.500" fill="none" stroke="#dfe2e6"/></svg></button>
    <button aria-label="Customization" class="w-4"><svg viewBox="0 0 11 9" class="h-[9px] w-[11px]"><path d="M0 1h11M0 4.500h11M0 8h11" stroke="#eceef1" stroke-width="1.500"/></svg></button>
  </div>
</footer>
<div class="flex-1 bg-black"></div>
</div>
</body>
</html>
